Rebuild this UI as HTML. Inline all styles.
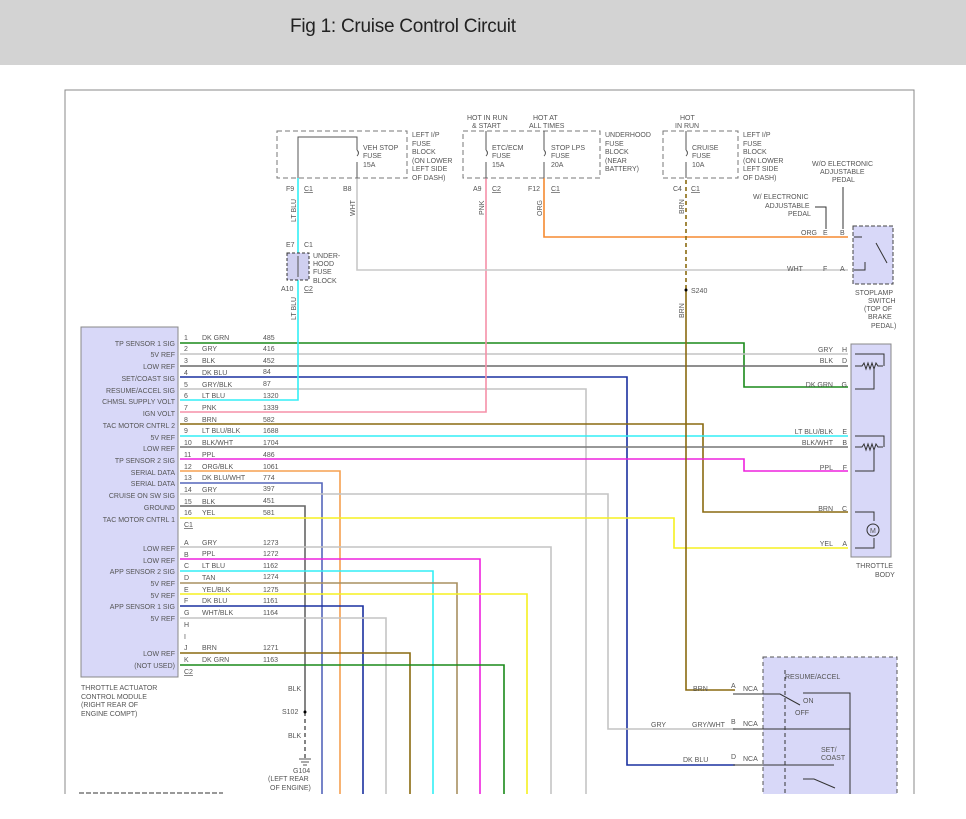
<!DOCTYPE html>
<html><head><meta charset="utf-8"><style>
html,body{margin:0;padding:0;background:#fff;width:966px;height:819px;overflow:hidden}
svg{display:block}
text{font-family:"Liberation Sans",sans-serif;font-size:7px;fill:#555}
</style></head><body>
<svg width="966" height="819" viewBox="0 0 966 819" xmlns="http://www.w3.org/2000/svg">
<defs><clipPath id="c"><rect x="0" y="0" width="966" height="794"/></clipPath></defs>
<rect x="0" y="0" width="966" height="65" fill="#d3d3d3"/>
<text x="290" y="32" style="font-size:19px;fill:#222" textLength="226">Fig 1: Cruise Control Circuit</text>
<g clip-path="url(#c)">
<path d="M65 794 V90 H914 V794" fill="none" stroke="#888" stroke-width="1"/>
<rect x="81" y="327" width="97" height="350" fill="#d8d8f8" stroke="#888"/>
<g text-anchor="end">
<text x="175" y="346">TP SENSOR 1 SIG</text><text x="175" y="357">5V REF</text><text x="175" y="369">LOW REF</text>
<text x="175" y="381">SET/COAST SIG</text><text x="175" y="393">RESUME/ACCEL SIG</text><text x="175" y="404">CHMSL SUPPLY VOLT</text>
<text x="175" y="416">IGN VOLT</text><text x="175" y="428">TAC MOTOR CNTRL 2</text><text x="175" y="440">5V REF</text>
<text x="175" y="451">LOW REF</text><text x="175" y="463">TP SENSOR 2 SIG</text><text x="175" y="475">SERIAL DATA</text>
<text x="175" y="486">SERIAL DATA</text><text x="175" y="498">CRUISE ON SW SIG</text><text x="175" y="510">GROUND</text>
<text x="175" y="522">TAC MOTOR CNTRL 1</text>
<text x="175" y="551">LOW REF</text><text x="175" y="563">LOW REF</text><text x="175" y="574">APP SENSOR 2 SIG</text>
<text x="175" y="586">5V REF</text><text x="175" y="598">5V REF</text><text x="175" y="609">APP SENSOR 1 SIG</text>
<text x="175" y="621">5V REF</text><text x="175" y="656">LOW REF</text><text x="175" y="668">(NOT USED)</text>
</g>
<text x="81" y="690">THROTTLE ACTUATOR</text><text x="81" y="699">CONTROL MODULE</text><text x="81" y="707">(RIGHT REAR OF</text><text x="81" y="716">ENGINE COMPT)</text>
<g>
<text x="184" y="340">1</text><text x="202" y="340">DK GRN</text><text x="263" y="340">485</text>
<text x="184" y="351">2</text><text x="202" y="351">GRY</text><text x="263" y="351">416</text>
<text x="184" y="363">3</text><text x="202" y="363">BLK</text><text x="263" y="363">452</text>
<text x="184" y="375">4</text><text x="202" y="375">DK BLU</text><text x="263" y="374">84</text>
<text x="184" y="387">5</text><text x="202" y="387">GRY/BLK</text><text x="263" y="386">87</text>
<text x="184" y="398">6</text><text x="202" y="398">LT BLU</text><text x="263" y="398">1320</text>
<text x="184" y="410">7</text><text x="202" y="410">PNK</text><text x="263" y="410">1339</text>
<text x="184" y="422">8</text><text x="202" y="422">BRN</text><text x="263" y="422">582</text>
<text x="184" y="433">9</text><text x="202" y="433">LT BLU/BLK</text><text x="263" y="433">1688</text>
<text x="184" y="445">10</text><text x="202" y="445">BLK/WHT</text><text x="263" y="445">1704</text>
<text x="184" y="457">11</text><text x="202" y="457">PPL</text><text x="263" y="457">486</text>
<text x="184" y="469">12</text><text x="202" y="469">ORG/BLK</text><text x="263" y="469">1061</text>
<text x="184" y="480">13</text><text x="202" y="480">DK BLU/WHT</text><text x="263" y="480">774</text>
<text x="184" y="492">14</text><text x="202" y="492">GRY</text><text x="263" y="491">397</text>
<text x="184" y="504">15</text><text x="202" y="504">BLK</text><text x="263" y="503">451</text>
<text x="184" y="515">16</text><text x="202" y="515">YEL</text><text x="263" y="515">581</text>
<text x="184" y="527" text-decoration="underline">C1</text>
<text x="184" y="545">A</text><text x="202" y="545">GRY</text><text x="263" y="545">1273</text>
<text x="184" y="557">B</text><text x="202" y="556">PPL</text><text x="263" y="556">1272</text>
<text x="184" y="568">C</text><text x="202" y="568">LT BLU</text><text x="263" y="568">1162</text>
<text x="184" y="580">D</text><text x="202" y="580">TAN</text><text x="263" y="579">1274</text>
<text x="184" y="592">E</text><text x="202" y="592">YEL/BLK</text><text x="263" y="592">1275</text>
<text x="184" y="603">F</text><text x="202" y="603">DK BLU</text><text x="263" y="603">1161</text>
<text x="184" y="615">G</text><text x="202" y="615">WHT/BLK</text><text x="263" y="615">1164</text>
<text x="184" y="627">H</text><text x="184" y="639">I</text>
<text x="184" y="650">J</text><text x="202" y="650">BRN</text><text x="263" y="650">1271</text>
<text x="184" y="662">K</text><text x="202" y="662">DK GRN</text><text x="263" y="662">1163</text>
<text x="184" y="674" text-decoration="underline">C2</text>
</g>
<g fill="none" stroke-width="1.6">
<path d="M180 343 H744 V387 H848" stroke="#1a8a1a"/>
<path d="M180 354 H848" stroke="#c4c4c4"/>
<path d="M180 366 H848" stroke="#6a6a6a"/>
<path d="M180 377 H627 V765 H735" stroke="#1a30a0"/>
<path d="M180 389 H586 V794" stroke="#c4c4c4"/>
<path d="M180 400 H298 V178" stroke="#33eef5"/>
<path d="M180 412 H486 V178" stroke="#f590a8"/>
<path d="M180 424 H703 V512 H848" stroke="#8a6a10"/>
<path d="M180 436 H848" stroke="#33eef5"/>
<path d="M180 447 H848" stroke="#777"/>
<path d="M180 459 H744 V471 H848" stroke="#ee22dd"/>
<path d="M180 471 H340 V794" stroke="#f5a050"/>
<path d="M180 483 H322 V794" stroke="#5566bb"/>
<path d="M180 494 H608 V729 H735" stroke="#c4c4c4"/>
<path d="M180 506 H305 V712" stroke="#666"/>
<path d="M180 518 H674 V548 H848" stroke="#f5f020"/>
<path d="M180 547 H551 V794" stroke="#c4c4c4"/>
<path d="M180 559 H480 V794" stroke="#ee22dd"/>
<path d="M180 571 H433 V794" stroke="#33eef5"/>
<path d="M180 583 H457 V794" stroke="#a89060"/>
<path d="M180 594 H527 V794" stroke="#f5f020"/>
<path d="M180 606 H363 V794" stroke="#1a30a0"/>
<path d="M180 618 H386 V794" stroke="#c4c4c4"/>
<path d="M180 653 H410 V794" stroke="#8a6a10"/>
<path d="M180 665 H504 V794" stroke="#1a8a1a"/>
<path d="M357 178 V270 H848" stroke="#c8c8c8"/>
<path d="M544 178 V237 H848" stroke="#f58a30"/>
<path d="M686 290 V690 H735" stroke="#8a6a10"/>
<path d="M686 180 V290" stroke="#8a6a10" stroke-dasharray="4,3"/>
<path d="M305 712 V758" stroke="#666" stroke-dasharray="4,3"/>
</g>
<text x="801" y="235">ORG</text><text x="823" y="235">E</text><text x="840" y="235">B</text>
<text x="787" y="271">WHT</text><text x="823" y="271">F</text><text x="840" y="271">A</text>
<g text-anchor="end">
<text x="833" y="352">GRY</text><text x="833" y="363">BLK</text><text x="833" y="387">DK GRN</text>
<text x="833" y="434">LT BLU/BLK</text><text x="833" y="445">BLK/WHT</text><text x="833" y="470">PPL</text>
<text x="833" y="511">BRN</text><text x="833" y="546">YEL</text>
<text x="847" y="352">H</text><text x="847" y="363">D</text><text x="847" y="387">G</text><text x="847" y="434">E</text>
<text x="847" y="445">B</text><text x="847" y="470">F</text><text x="847" y="511">C</text><text x="847" y="546">A</text>
</g>
<g fill="none" stroke="#777" stroke-dasharray="5,3">
<rect x="277" y="131" width="130" height="47"/>
<rect x="463" y="131" width="137" height="47"/>
<rect x="663" y="131" width="75" height="47"/>
</g>
<path d="M298 178 V137 H357 V150 M357 162 V178 M486 131 V150 M486 162 V178 M544 131 V150 M544 162 V178 M686 131 V150 M686 162 V178" stroke="#555" fill="none"/>
<path d="M357 150 q3 3 0 6 M486 150 q3 3 0 6 M544 150 q3 3 0 6 M686 150 q3 3 0 6" stroke="#555" fill="none"/>
<text x="363" y="150">VEH STOP</text><text x="363" y="158">FUSE</text><text x="363" y="167">15A</text>
<text x="412" y="137">LEFT I/P</text><text x="412" y="146">FUSE</text><text x="412" y="154">BLOCK</text><text x="412" y="163">(ON LOWER</text><text x="412" y="171">LEFT SIDE</text><text x="412" y="180">OF DASH)</text>
<text x="467" y="120">HOT IN RUN</text><text x="472" y="128">&amp; START</text><text x="533" y="120">HOT AT</text><text x="529" y="128">ALL TIMES</text>
<text x="492" y="150">ETC/ECM</text><text x="492" y="158">FUSE</text><text x="492" y="167">15A</text>
<text x="551" y="150">STOP LPS</text><text x="551" y="158">FUSE</text><text x="551" y="167">20A</text>
<text x="605" y="137">UNDERHOOD</text><text x="605" y="146">FUSE</text><text x="605" y="154">BLOCK</text><text x="605" y="163">(NEAR</text><text x="605" y="171">BATTERY)</text>
<text x="680" y="120">HOT</text><text x="675" y="128">IN RUN</text>
<text x="692" y="150">CRUISE</text><text x="692" y="158">FUSE</text><text x="692" y="167">10A</text>
<text x="743" y="137">LEFT I/P</text><text x="743" y="146">FUSE</text><text x="743" y="154">BLOCK</text><text x="743" y="163">(ON LOWER</text><text x="743" y="171">LEFT SIDE</text><text x="743" y="180">OF DASH)</text>
<text x="286" y="191">F9</text><text x="304" y="191" text-decoration="underline">C1</text>
<text x="343" y="191">B8</text>
<text x="473" y="191">A9</text><text x="492" y="191" text-decoration="underline">C2</text>
<text x="528" y="191">F12</text><text x="551" y="191" text-decoration="underline">C1</text>
<text x="673" y="191">C4</text><text x="691" y="191" text-decoration="underline">C1</text>
<text transform="translate(296,222) rotate(-90)">LT BLU</text>
<text transform="translate(355,216) rotate(-90)">WHT</text>
<text transform="translate(484,215) rotate(-90)">PNK</text>
<text transform="translate(542,216) rotate(-90)">ORG</text>
<text transform="translate(684,214) rotate(-90)">BRN</text>
<text transform="translate(684,318) rotate(-90)">BRN</text>
<text transform="translate(296,320) rotate(-90)">LT BLU</text>
<circle cx="686" cy="290" r="1.5" fill="#000"/><text x="691" y="293">S240</text>
<rect x="287" y="253" width="22" height="27" fill="#d0d0f0" stroke="#333" stroke-dasharray="3,2"/>
<path d="M298 256 V277" stroke="#555"/>
<text x="286" y="247">E7</text><text x="304" y="247">C1</text>
<text x="313" y="258">UNDER-</text><text x="313" y="266">HOOD</text><text x="313" y="274">FUSE</text><text x="313" y="283">BLOCK</text>
<text x="281" y="291">A10</text><text x="304" y="291" text-decoration="underline">C2</text>
<rect x="853" y="226" width="40" height="58" fill="#d8d8f8" stroke="#444" stroke-dasharray="4,2"/>
<path d="M854 237 H862 M876 243 L887 263 M854 270 H865 V262" stroke="#333" fill="none"/>
<text x="812" y="166">W/O ELECTRONIC</text><text x="820" y="174">ADJUSTABLE</text><text x="832" y="182">PEDAL</text>
<text x="753" y="199">W/ ELECTRONIC</text><text x="765" y="208">ADJUSTABLE</text><text x="788" y="216">PEDAL</text>
<path d="M815 207 H826 V229 M843 187 V229" stroke="#333" fill="none"/>
<text x="855" y="295">STOPLAMP</text><text x="868" y="303">SWITCH</text><text x="864" y="311">(TOP OF</text><text x="868" y="319">BRAKE</text><text x="871" y="328">PEDAL)</text>
<rect x="851" y="344" width="40" height="213" fill="#d8d8f8" stroke="#888"/>
<path d="M855 354 H884 V366 M855 366 H862 l2 -3 l2 6 l2 -6 l2 6 l2 -6 l2 6 l2 -6 l2 3 H883 M874 369 V389 H855 M855 436 H884 V447 M855 447 H862 l2 -3 l2 6 l2 -6 l2 6 l2 -6 l2 6 l2 -6 l2 3 H883 M874 450 V471 H855 M855 512 H874 V521 M874 538 V548 H855" stroke="#333" fill="none"/>
<circle cx="873" cy="530" r="6" fill="none" stroke="#333"/><text x="870" y="533">M</text>
<text x="856" y="568">THROTTLE</text><text x="875" y="577">BODY</text>
<rect x="763" y="657" width="134" height="140" fill="#d8d8f8" stroke="#555" stroke-dasharray="4,3"/>
<path d="M785 670 V800" stroke="#333" stroke-dasharray="4,3"/>
<path d="M733 694 H780 L800 705 M803 693 H850 V800 M733 729 H850 M733 765 H834 M803 779 H814 L835 788" stroke="#333" fill="none"/>
<text x="785" y="679">RESUME/ACCEL</text><text x="803" y="703">ON</text><text x="795" y="715">OFF</text>
<text x="821" y="752">SET/</text><text x="821" y="760">COAST</text>
<text x="693" y="691">BRN</text><text x="731" y="688">A</text><text x="743" y="691">NCA</text>
<text x="651" y="727">GRY</text><text x="692" y="727">GRY/WHT</text><text x="731" y="724">B</text><text x="743" y="726">NCA</text>
<text x="683" y="762">DK BLU</text><text x="731" y="759">D</text><text x="743" y="761">NCA</text>
<text x="288" y="691">BLK</text><circle cx="305" cy="712" r="1.5" fill="#000"/><text x="282" y="714">S102</text>
<text x="288" y="738">BLK</text>
<path d="M299 759 H311 M301 762 H309 M303 765 H307" stroke="#555"/>
<text x="293" y="773">G104</text><text x="268" y="781">(LEFT REAR</text><text x="270" y="790">OF ENGINE)</text>
<path d="M79 793 H223" stroke="#333" stroke-dasharray="5,2"/>
</g>
</svg>
</body></html>
